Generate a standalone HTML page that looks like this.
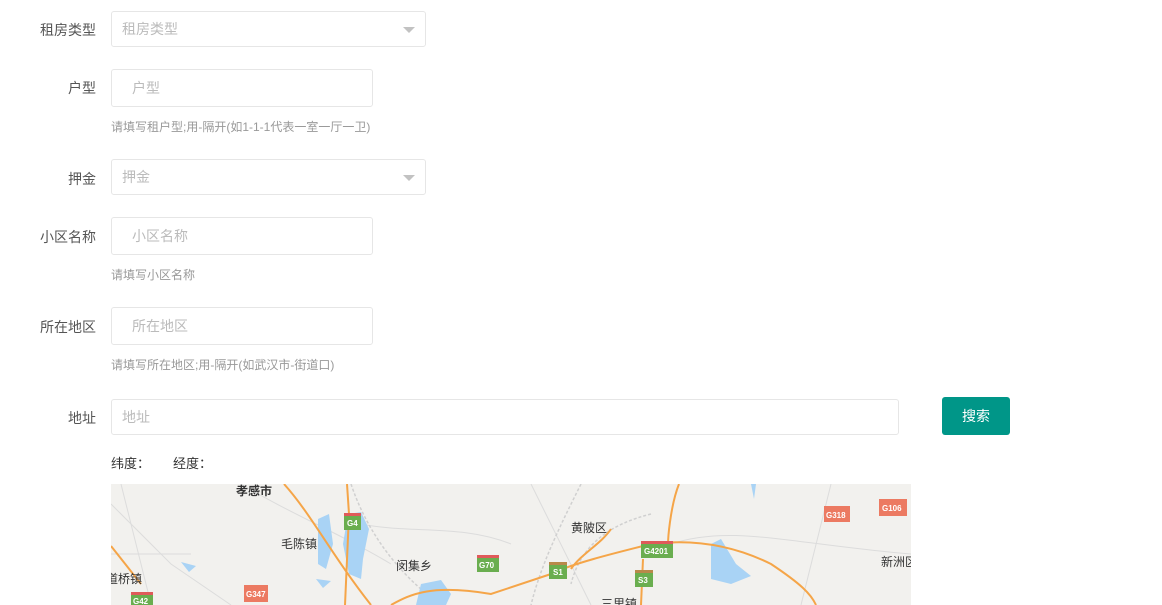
<!DOCTYPE html>
<html><head><meta charset="utf-8">
<style>
*{margin:0;padding:0;box-sizing:border-box}
body{width:1162px;height:605px;overflow:hidden;background:#fff;font-family:"Liberation Sans","Noto Sans CJK SC",sans-serif;font-size:14px;color:#333;position:relative}
.lbl{position:absolute;right:calc(1162px - 96px);font-size:14px;color:#555;white-space:nowrap}
.inp{position:absolute;border:1px solid #e6e6e6;border-radius:3px;background:#fff;color:#bbb;font-size:14px;padding-left:10px;display:flex;align-items:center}
.tip{position:absolute;left:111px;font-size:12px;color:#999}
.arr{position:absolute;right:10px;top:15px;width:0;height:0;border-left:6px solid transparent;border-right:6px solid transparent;border-top:6px solid #c2c2c2}
.btn{position:absolute;left:942px;top:397px;width:68px;height:38px;background:#009688;color:#fff;border-radius:3px;font-size:14px;display:flex;align-items:center;justify-content:center}
</style></head><body>
<div class="lbl" style="top:20px">租房类型</div>
<div class="inp" style="left:111px;top:11px;width:315px;height:36px">租房类型<span class="arr"></span></div>

<div class="lbl" style="top:78px">户型</div>
<div class="inp" style="left:111px;top:69px;width:262px;height:38px;padding-left:20px">户型</div>
<div class="tip" style="top:118px">请填写租户型;用-隔开(如1-1-1代表一室一厅一卫)</div>

<div class="lbl" style="top:169px">押金</div>
<div class="inp" style="left:111px;top:159px;width:315px;height:36px">押金<span class="arr"></span></div>

<div class="lbl" style="top:227px">小区名称</div>
<div class="inp" style="left:111px;top:217px;width:262px;height:38px;padding-left:20px">小区名称</div>
<div class="tip" style="top:266px">请填写小区名称</div>

<div class="lbl" style="top:317px">所在地区</div>
<div class="inp" style="left:111px;top:307px;width:262px;height:38px;padding-left:20px">所在地区</div>
<div class="tip" style="top:356px">请填写所在地区;用-隔开(如武汉市-街道口)</div>

<div class="lbl" style="top:408px">地址</div>
<div class="inp" style="left:111px;top:399px;width:788px;height:36px">地址</div>
<div class="btn">搜索</div>

<div style="position:absolute;left:111px;top:453px;font-size:13px;color:#333">纬度：</div>
<div style="position:absolute;left:173px;top:453px;font-size:13px;color:#333">经度：</div>

<svg style="position:absolute;left:111px;top:484px" width="800" height="121" viewBox="0 0 800 121">
<rect width="800" height="121" fill="#f2f1ee"/>
<g stroke="#dcdcdc" fill="none" stroke-width="1">
<path d="M0 20 L60 80 L120 121"/><path d="M10 0 L40 120"/><path d="M130 0 C180 30 230 50 280 80"/>
<path d="M420 0 L480 121"/><path d="M720 0 L690 121"/><path d="M560 60 C620 40 680 60 800 70"/>
<path d="M250 40 C300 50 350 40 400 60"/><path d="M0 70 L80 70"/>
</g>
<g stroke="#d0d0d0" fill="none" stroke-width="1.5" stroke-dasharray="3 2">
<path d="M240 0 C260 60 300 100 330 121"/><path d="M470 0 C450 40 430 80 420 121"/><path d="M540 30 C500 40 470 60 460 100"/>
</g>
<g fill="#a9d3f5">
<path d="M207 35 L218 30 L222 60 L215 85 L207 80 Z"/>
<path d="M237 30 L250 28 L258 45 L252 75 L250 95 L238 90 L232 60 Z"/>
<path d="M310 100 L330 96 L340 110 L335 121 L305 121 Z"/>
<path d="M600 60 L610 55 L625 80 L640 92 L620 100 L600 95 Z"/>
<path d="M205 95 L220 97 L212 104 Z"/>
<path d="M70 78 L85 82 L78 88 Z"/>
<path d="M640 0 L645 0 L643 15 Z"/>
</g>
<g stroke="#f5a548" fill="none" stroke-width="2">
<path d="M236 0 L238 30 L234 121"/>
<path d="M173 0 C200 30 220 70 260 121"/>
<path d="M568 0 C560 20 555 60 558 70"/>
<path d="M440 90 C460 80 500 70 540 60 C580 55 620 60 660 80 C690 100 700 110 705 121"/>
<path d="M500 45 C490 60 470 70 460 85"/>
<path d="M532 75 L530 121"/>
<path d="M0 62 L30 100"/>
<path d="M280 121 C300 110 320 100 380 110 L440 90"/>
</g>
<g font-size="11" font-family="Liberation Sans,Noto Sans CJK SC,sans-serif" font-weight="bold">
<rect x="233" y="29" width="17" height="17" fill="#6aae4f"/><rect x="233" y="29" width="17" height="3" fill="#e05a5a"/><text x="236" y="42" fill="#fff" font-size="8">G4</text>
<rect x="366" y="71" width="22" height="17" fill="#6aae4f"/><rect x="366" y="71" width="22" height="3" fill="#e05a5a"/><text x="368" y="84" fill="#fff" font-size="8">G70</text>
<rect x="438" y="78" width="18" height="17" fill="#6aae4f"/><rect x="438" y="78" width="18" height="3" fill="#b8894a"/><text x="442" y="91" fill="#fff" font-size="8">S1</text>
<rect x="530" y="57" width="32" height="17" fill="#6aae4f"/><rect x="530" y="57" width="32" height="3" fill="#e05a5a"/><text x="533" y="70" fill="#fff" font-size="8">G4201</text>
<rect x="524" y="86" width="18" height="17" fill="#6aae4f"/><rect x="524" y="86" width="18" height="3" fill="#b8894a"/><text x="527" y="99" fill="#fff" font-size="8">S3</text>
<rect x="20" y="108" width="22" height="13" fill="#6aae4f"/><rect x="20" y="108" width="22" height="3" fill="#e05a5a"/><text x="22" y="120" fill="#fff" font-size="8">G42</text>
<rect x="133" y="101" width="24" height="17" fill="#ec7a62"/><text x="135" y="113" fill="#fff" font-size="8">G347</text>
<rect x="713" y="22" width="26" height="16" fill="#ec7a62"/><text x="715" y="34" fill="#fff" font-size="8">G318</text>
<rect x="768" y="15" width="28" height="17" fill="#ec7a62"/><text x="771" y="27" fill="#fff" font-size="8">G106</text>
</g>
<g font-size="12" fill="#333" font-family="Liberation Sans,Noto Sans CJK SC,sans-serif">
<text x="125" y="11" font-weight="bold">孝感市</text>
<text x="170" y="64">毛陈镇</text>
<text x="285" y="86">闵集乡</text>
<text x="460" y="48">黄陂区</text>
<text x="-5" y="99">道桥镇</text>
<text x="770" y="82">新洲区</text>
<text x="490" y="124">三里镇</text>
</g>
</svg>
</body></html>
